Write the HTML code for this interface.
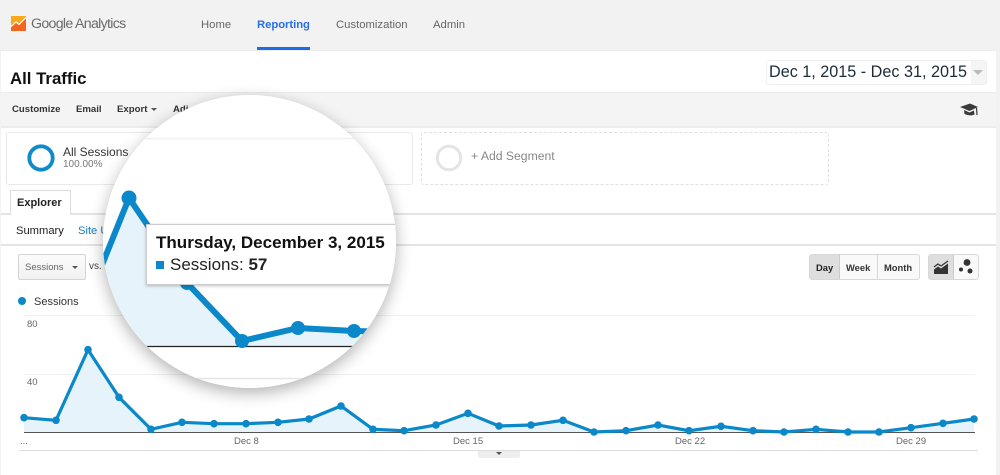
<!DOCTYPE html>
<html><head><meta charset="utf-8"><style>
html,body{margin:0;padding:0;background:#fff}
#p{position:relative;width:1000px;height:475px;overflow:hidden;background:#fff;font-family:"Liberation Sans",sans-serif;color:#333;filter:blur(.3px)}
#p div,#p span.t{position:absolute;box-sizing:border-box}
.t{white-space:nowrap;line-height:14px}
.n{font-size:11.3px;top:18px;color:#666}
.b{font-size:9.6px;font-weight:bold;top:103px;color:#333}
.g{font-size:9.4px;font-weight:bold;top:261px;color:#333}
.l{font-size:9.5px;color:#666;top:435px}
</style></head><body><div id="p">
<div style="left:0;top:0;width:1000px;height:50px;background:#f2f2f2"></div>
<div style="left:996px;top:0;width:4px;height:475px;background:#f2f2f2"></div>
<div style="left:0;top:50px;width:1px;height:425px;background:#f2f2f2"></div>
<div style="left:0;top:50px;width:996px;height:1px;background:#ececec"></div>
<svg style="position:absolute;left:11px;top:16px" width="15" height="15" viewBox="0 0 15 15"><rect width="15" height="15" fill="#fba81c"/><path d="M0 15V11l5-4.500 3 2.500L15 2v13z" fill="#f4661f"/><path d="M0 10.500l5-4.500 3 2.500L15 1.500" fill="none" stroke="#fff" stroke-width="1.200"/></svg>
<span class="t" style="left:31px;top:17px;font-size:14.200px;color:#6b6b6b;letter-spacing:-.7px">Google Analytics</span>
<span class="t n" style="left:201px">Home</span>
<span class="t n" style="left:257px;color:#2a6fe8;font-weight:bold;letter-spacing:-.05px">Reporting</span>
<span class="t n" style="left:336px">Customization</span>
<span class="t n" style="left:433px">Admin</span>
<div style="left:257px;top:47px;width:53px;height:3px;background:#1f6be8"></div>

<span class="t" style="left:10px;top:71px;font-size:16.800px;font-weight:bold;color:#111;line-height:16px">All Traffic</span>
<div style="left:766px;top:60px;width:221px;height:25px;border:1px solid #f0f0f0;border-radius:3px;background:#fff"></div>
<div style="left:971px;top:61px;width:15px;height:23px;background:#f5f5f5"></div>
<span class="t" style="left:769px;top:64px;font-size:16.200px;line-height:16px;color:#1c2b3a">Dec 1, 2015 - Dec 31, 2015</span>
<div style="left:973px;top:70px;width:0;height:0;border:5px solid transparent;border-top:5px solid #bbb;border-bottom:0"></div>

<div style="left:1px;top:92px;width:995px;height:36px;background:#f4f4f4;border-top:1px solid #ececec;border-bottom:2px solid #ececec"></div>
<span class="t b" style="left:12px">Customize</span>
<span class="t b" style="left:76px">Email</span>
<span class="t b" style="left:117px">Export</span>
<div style="left:151px;top:108px;width:0;height:0;border:3px solid transparent;border-top:3px solid #555;border-bottom:0"></div>
<span class="t b" style="left:173px">Adi</span>
<svg style="position:absolute;left:960px;top:102px" width="19" height="15" viewBox="0 0 19 15"><path d="M0 5L10 1.500 18 5 9.500 9z" fill="#3a3a3a"/><path d="M4 8l5.500 2.500L14 8.500l.5 4c-3 1.500-6 1-10-.5z" fill="#3a3a3a"/><path d="M16.500 6l.5 7" stroke="#3a3a3a" stroke-width="1.200"/></svg>

<div style="left:6px;top:132px;width:407px;height:53px;border:1px solid #e9e9e9;border-radius:3px"></div>
<svg style="position:absolute;left:25px;top:142px" width="32" height="32"><circle cx="16" cy="16" r="11.700" fill="none" stroke="#0f8bca" stroke-width="3.800"/></svg>
<span class="t" style="left:63px;top:145px;font-size:12px">All Sessions</span>
<span class="t" style="left:63px;top:158px;font-size:10px;color:#777">100.00%</span>
<div style="left:421px;top:132px;width:408px;height:53px;border:1px dashed #e0e0e0;border-radius:3px"></div>
<svg style="position:absolute;left:433px;top:142px" width="32" height="32"><circle cx="16" cy="16" r="11.700" fill="none" stroke="#e4e4e4" stroke-width="3"/></svg>
<span class="t" style="left:471px;top:149px;font-size:12.200px;color:#888">+ Add Segment</span>

<div style="left:1px;top:213px;width:995px;height:2px;background:#e4e4e4"></div>
<div style="left:10px;top:190px;width:61px;height:25px;background:#fff;border:1px solid #dcdcdc;border-bottom:0"></div>
<span class="t" style="left:17px;top:196px;font-size:11px;font-weight:bold;color:#222">Explorer</span>
<span class="t" style="left:16px;top:224px;font-size:11.200px;color:#222">Summary</span>
<span class="t" style="left:78px;top:224px;font-size:11.200px;color:#1a7dbf">Site Usage</span>
<div style="left:1px;top:244px;width:995px;height:2px;background:#e4e4e4"></div>

<div style="left:18px;top:254px;width:68px;height:26px;border:1px solid #d5d5d5;border-radius:2px;background:linear-gradient(#fbfbfb,#f1f1f1)"></div>
<span class="t" style="left:25px;top:261px;font-size:9.500px;color:#666">Sessions</span>
<div style="left:72px;top:266px;width:0;height:0;border:3.500px solid transparent;border-top:3.500px solid #555;border-bottom:0"></div>
<span class="t" style="left:89px;top:260px;font-size:10px;color:#444">vs.</span>

<div style="left:809px;top:254px;width:111px;height:26px;border:1px solid #d8d8d8;border-radius:3px;background:#f9f9f9"></div>
<div style="left:810px;top:255px;width:30px;height:24px;background:#dedede;border-right:1px solid #ccc"></div>
<div style="left:877px;top:255px;width:1px;height:24px;background:#d8d8d8"></div>
<span class="t g" style="left:816px;color:#222">Day</span>
<span class="t g" style="left:846px">Week</span>
<span class="t g" style="left:884px">Month</span>
<div style="left:928px;top:254px;width:51px;height:26px;border:1px solid #d8d8d8;border-radius:3px;background:#f9f9f9"></div>
<div style="left:929px;top:255px;width:25px;height:24px;background:#dedede;border-right:1px solid #ccc"></div>
<svg style="position:absolute;left:933px;top:258px" width="42" height="18" viewBox="0 0 42 18"><path d="M1 11.500l4-3 3 2 7-5V16H1z" fill="#333"/><path d="M1 9l4-3 3 2 7-5" fill="none" stroke="#333" stroke-width="1.200"/><circle cx="34" cy="4.500" r="3.400" fill="#333"/><circle cx="28" cy="11.500" r="2" fill="#333"/><circle cx="37" cy="13" r="2.500" fill="#333"/></svg>

<svg style="position:absolute;left:0;top:0" width="1000" height="475" viewBox="0 0 1000 475">
<circle cx="22" cy="301" r="4" fill="#0a88c9"/>
<path d="M24 315.500H975M24 374.500H975" stroke="#f1f1f1" stroke-width="1"/>
<path d="M24 417.700L56 420.300L88 349.700L119 397.300L151 429.300L182 422.300L214 423.700L246 423.700L278 422.300L309 419L341 406L373 429.300L404 430.700L436 425L468 413.300L499 426L531 425L563 420.300L594 432L626 430.700L658 425L689 430.700L721 426.300L753 430.700L784 432L816 429.300L848 432L879 432L911 427.700L943 423.300L974 419V432H24Z" fill="#e6f3fa"/>
<path d="M24 432.500H975" stroke="#555" stroke-width="1"/>
<path d="M24 417.700L56 420.300L88 349.700L119 397.300L151 429.300L182 422.300L214 423.700L246 423.700L278 422.300L309 419L341 406L373 429.300L404 430.700L436 425L468 413.300L499 426L531 425L563 420.300L594 432L626 430.700L658 425L689 430.700L721 426.300L753 430.700L784 432L816 429.300L848 432L879 432L911 427.700L943 423.300L974 419" fill="none" stroke="#0a88c9" stroke-width="3.200"/>
<g fill="#0a88c9"><circle cx="24" cy="417.700" r="3.800"/><circle cx="56" cy="420.300" r="3.800"/><circle cx="88" cy="349.700" r="3.800"/><circle cx="119" cy="397.300" r="3.800"/><circle cx="151" cy="429.300" r="3.800"/><circle cx="182" cy="422.300" r="3.800"/><circle cx="214" cy="423.700" r="3.800"/><circle cx="246" cy="423.700" r="3.800"/><circle cx="278" cy="422.300" r="3.800"/><circle cx="309" cy="419" r="3.800"/><circle cx="341" cy="406" r="3.800"/><circle cx="373" cy="429.300" r="3.800"/><circle cx="404" cy="430.700" r="3.800"/><circle cx="436" cy="425" r="3.800"/><circle cx="468" cy="413.300" r="3.800"/><circle cx="499" cy="426" r="3.800"/><circle cx="531" cy="425" r="3.800"/><circle cx="563" cy="420.300" r="3.800"/><circle cx="594" cy="432" r="3.800"/><circle cx="626" cy="430.700" r="3.800"/><circle cx="658" cy="425" r="3.800"/><circle cx="689" cy="430.700" r="3.800"/><circle cx="721" cy="426.300" r="3.800"/><circle cx="753" cy="430.700" r="3.800"/><circle cx="784" cy="432" r="3.800"/><circle cx="816" cy="429.300" r="3.800"/><circle cx="848" cy="432" r="3.800"/><circle cx="879" cy="432" r="3.800"/><circle cx="911" cy="427.700" r="3.800"/><circle cx="943" cy="423.300" r="3.800"/><circle cx="974" cy="419" r="3.800"/></g>
</svg>
<span class="t" style="left:34px;top:295px;font-size:11px;color:#333">Sessions</span>
<span class="t l" style="left:27px;top:318px">80</span>
<span class="t l" style="left:27px;top:376px">40</span>
<span class="t l" style="left:20px">...</span>
<span class="t l" style="left:234px">Dec 8</span>
<span class="t l" style="left:453px">Dec 15</span>
<span class="t l" style="left:675px">Dec 22</span>
<span class="t l" style="left:896px">Dec 29</span>
<div style="left:19px;top:450px;width:959px;height:1px;background:#ddd"></div>
<div style="left:478px;top:451px;width:42px;height:7px;background:#eee;border-radius:0 0 2px 2px"></div>
<div style="left:496px;top:452px;width:0;height:0;border:3.500px solid transparent;border-top:3.500px solid #555;border-bottom:0"></div>

<div style="left:103px;top:95px;width:293px;height:293px;border-radius:50%;box-shadow:0 5px 16px rgba(0,0,0,.3)"></div>
<div style="left:103px;top:95px;width:293px;height:293px;border-radius:50%;overflow:hidden;background:#fff">
<svg style="position:absolute;left:0;top:0" width="293" height="293" viewBox="103 95 293 293">
<path d="M100 138.500H400" stroke="#f0f0f0" stroke-width="1.500"/>
<path d="M100 378.500H400" stroke="#e6e6e6" stroke-width="1.500"/>
<path d="M100 270L129 198L187 283L242 341L298 328L354 331L400 332V346H100Z" fill="#e6f3fa"/>
<path d="M100 346.500H400" stroke="#222" stroke-width="1.300"/>
<path d="M100 270L129 198L187 283L242 341L298 328L354 331L400 332" fill="none" stroke="#0a88c9" stroke-width="6"/>
<circle cx="129" cy="198" r="7.500" fill="#0a88c9"/><circle cx="187" cy="283" r="7" fill="#0a88c9"/><circle cx="242" cy="341" r="7" fill="#0a88c9"/><circle cx="298" cy="328" r="7" fill="#0a88c9"/><circle cx="354" cy="331" r="7" fill="#0a88c9"/>
</svg>
<div style="left:43px;top:129px;width:270px;height:61px;background:#fff;border:1px solid #ccc;box-shadow:0 1px 3px rgba(0,0,0,.25)"></div>
<span class="t" style="left:53px;top:140px;font-size:17.050px;line-height:16px;font-weight:bold;color:#111">Thursday, December 3, 2015</span>
<div style="left:53px;top:166px;width:8px;height:8px;background:#0a88c9"></div>
<span class="t" style="left:67px;top:162px;font-size:17px;line-height:16px;color:#222">Sessions: <b>57</b></span>
</div>
</div></body></html>
